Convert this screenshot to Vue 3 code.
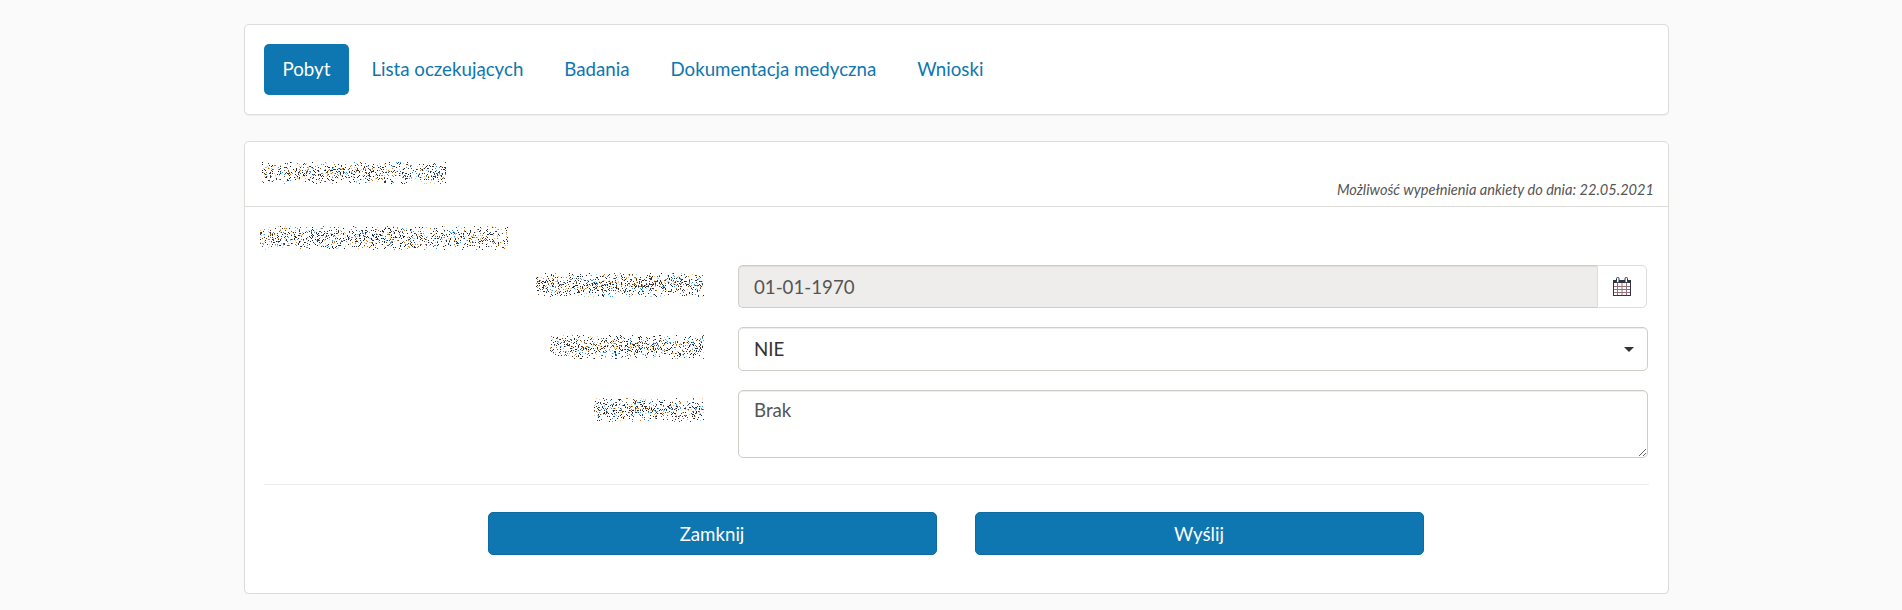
<script setup>
import { computed } from 'vue'

const tabs = ['Pobyt', 'Lista oczekujących', 'Badania', 'Dokumentacja medyczna', 'Wnioski']
const palette = ['#23232b', '#23232b', '#2b2b33', '#3a3a3a', '#c9791e', '#3f9ae0', '#9fd4f5', '#f2c58a', '#1f3f80', '#7a4a20']

function noise(w, h, seed, count) {
  let s = seed
  const r = () => {
    s = (s * 1664525 + 1013904223) % 4294967296
    return s / 4294967296
  }
  const out = []
  for (let i = 0; i < count; i++) {
    const x = Math.floor(r() * w)
    const base = h * 0.5 + (r() + r() + r() - 1.5) * h * 0.52
    out.push({ x, y: Math.floor(base), c: palette[Math.floor(r() * palette.length)] })
  }
  return out
}

const blobs = computed(() => ({
  title: noise(184, 22, 11, 850),
  section: noise(248, 24, 23, 1200),
  l1: noise(168, 24, 37, 1000),
  l2: noise(154, 24, 51, 850),
  l3: noise(110, 24, 73, 600)
}))
</script>

<template>
  <div class="page">
    <nav class="panel tabs">
      <a v-for="(t, i) in tabs" :key="t" class="tab" :class="{ active: i === 0 }">{{ t }}</a>
    </nav>

    <section class="panel card">
      <header class="card-head">
        <svg class="blob" width="184" height="22">
          <rect v-for="(d, i) in blobs.title" :key="i" :x="d.x" :y="d.y" width="1" height="1" :fill="d.c" />
        </svg>
        <span class="deadline">Możliwość wypełnienia ankiety do dnia: 22.05.2021</span>
      </header>

      <div class="card-body">
        <svg class="blob section" width="248" height="24">
          <rect v-for="(d, i) in blobs.section" :key="i" :x="d.x" :y="d.y" width="1" height="1" :fill="d.c" />
        </svg>

        <div class="row">
          <div class="label">
            <svg class="blob" width="168" height="24">
              <rect v-for="(d, i) in blobs.l1" :key="i" :x="d.x" :y="d.y" width="1" height="1" :fill="d.c" />
            </svg>
          </div>
          <div class="group">
            <input class="control locked" value="01-01-1970" readonly />
            <span class="addon">
              <svg width="18" height="19" viewBox="0 0 18 19">
                <rect x="0.5" y="3.5" width="17" height="15" fill="#fff" stroke="#2f3440" />
                <rect x="0" y="3" width="18" height="3" fill="#2f3440" />
                <rect x="3.5" y="0.5" width="2.5" height="5" rx="1" fill="#fff" stroke="#2f3440" />
                <rect x="12" y="0.5" width="2.5" height="5" rx="1" fill="#fff" stroke="#2f3440" />
                <path d="M4.5 6v12M9 6v12M13.5 6v12M1 9.5h16M1 12.5h16M1 15.5h16" stroke="#9a6f78" stroke-width="1" fill="none" />
              </svg>
            </span>
          </div>
        </div>

        <div class="row">
          <div class="label">
            <svg class="blob" width="154" height="24">
              <rect v-for="(d, i) in blobs.l2" :key="i" :x="d.x" :y="d.y" width="1" height="1" :fill="d.c" />
            </svg>
          </div>
          <div class="select control">
            <span>NIE</span>
            <i class="caret"></i>
          </div>
        </div>

        <div class="row">
          <div class="label">
            <svg class="blob" width="110" height="24">
              <rect v-for="(d, i) in blobs.l3" :key="i" :x="d.x" :y="d.y" width="1" height="1" :fill="d.c" />
            </svg>
          </div>
          <textarea class="control area">Brak</textarea>
        </div>

        <hr class="rule" />

        <div class="actions">
          <button class="btn">Zamknij</button>
          <button class="btn">Wyślij</button>
        </div>
      </div>
    </section>
  </div>
</template>

<style scoped>
.page {
  width: 1425px;
  margin-left: 244px;
  padding-top: 24px;
  font-family: Lato, "Liberation Sans", sans-serif;
  font-size: 18.7px;
  color: #333;
}
.panel {
  background: #fff;
  border: 1px solid #dddcd8;
  border-radius: 5px;
  box-shadow: 0 1px 1px rgba(0, 0, 0, 0.05);
  box-sizing: border-box;
}
.tabs {
  display: flex;
  gap: 4px;
  height: 91px;
  padding: 19px;
  margin-bottom: 26px;
  align-items: flex-start;
}
.tab {
  height: 51px;
  line-height: 51px;
  padding: 0 18.5px;
  border-radius: 5px;
  color: #0e76b0;
}
.tab.active {
  background: #0e76b0;
  color: #fff;
}
.card {
  height: 453px;
}
.card-head {
  display: flex;
  justify-content: space-between;
  height: 65px;
  padding: 20px 14px 0 17px;
  border-bottom: 1px solid #dddcd8;
  box-sizing: border-box;
}
.deadline {
  align-self: flex-end;
  padding-bottom: 6px;
  font-size: 14.6px;
  font-style: italic;
  color: #555;
  line-height: 20px;
}
.blob {
  display: block;
  flex: none;
}
.card-body {
  padding: 19px 19px 0 19px;
}
.section {
  margin: 0 0 15px -4px;
}
.row {
  display: grid;
  grid-template-columns: 474px 910px;
  margin-bottom: 19px;
  align-items: start;
}
.label {
  display: flex;
  justify-content: flex-end;
  padding: 8px 34px 0 0;
}
.control {
  font-family: inherit;
  font-size: 18.7px;
  color: #555;
  border: 1px solid #cfcdc8;
  border-radius: 5px;
  box-sizing: border-box;
  padding: 0 15px;
  box-shadow: inset 0 1px 1px rgba(0, 0, 0, 0.075);
  outline: none;
  width: 100%;
  background: #fff;
}
.group {
  display: flex;
  width: 909px;
}
.locked {
  flex: 1;
  height: 43px;
  min-width: 0;
  background: #eeedeb;
  border-radius: 5px 0 0 5px;
  border-right: 0;
}
.addon {
  width: 50px;
  height: 43px;
  flex: none;
  display: flex;
  align-items: center;
  justify-content: center;
  border: 1px solid #dddcd8;
  border-radius: 0 5px 5px 0;
  box-sizing: border-box;
}
.select {
  display: flex;
  align-items: center;
  justify-content: space-between;
  height: 44px;
  color: #333;
  padding-right: 13px;
}
.caret {
  width: 0;
  height: 0;
  border-left: 5px solid transparent;
  border-right: 5px solid transparent;
  border-top: 5px solid #333;
}
.area {
  display: block;
  height: 68px;
  padding-top: 7px;
  line-height: 25px;
  resize: vertical;
}
.rule {
  border: 0;
  border-top: 1px solid #eeeeec;
  margin: 26px 0 27px 0;
  width: 1385px;
}
.actions {
  display: flex;
  justify-content: center;
  gap: 38px;
  margin-left: -2px;
}
.btn {
  width: 449px;
  height: 43px;
  font-family: inherit;
  font-size: 18.7px;
  color: #fff;
  background: #0e76b0;
  border: 1px solid #0c6a9f;
  border-radius: 5px;
}
</style>

<style>
html, body {
  background: #fafafa;
}
</style>
